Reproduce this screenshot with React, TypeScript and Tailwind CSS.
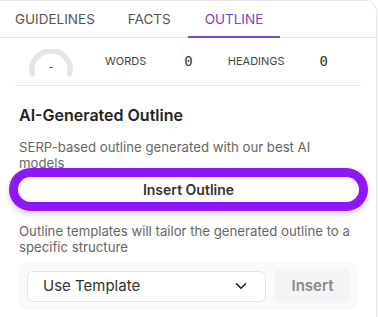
import React from "react";

export default function App() {
  return (
    <div
      className="w-[378px] h-[317px] bg-white overflow-hidden"
      style={{ fontFamily: "Inter, 'Noto Sans', sans-serif" }}
    >
      <div className="w-[377px] h-[330px] bg-white border-r border-t border-[#e6e6e8] rounded-tr-[12px]">
        {/* Tabs */}
        <div className="flex h-[37px] border-b border-[#e4e4e7]">
          <div className="pl-[15px] pr-[16px] flex items-center text-[13.5px] text-[#555] uppercase h-[37px]">
            Guidelines
          </div>
          <div className="px-[17px] flex items-center text-[13.5px] text-[#555] uppercase h-[37px]">
            Facts
          </div>
          <div className="px-[17px] flex items-center text-[13.5px] text-[#7d3fd0] uppercase h-[37px] border-b-[2px] border-[#7d45d6] mb-[-1px] pt-[1px]">
            Outline
          </div>
        </div>

        {/* Stats */}
        <div className="mx-[15px] h-[48px] border-b border-[#e7e7ea] flex items-center">
          <div className="ml-[14px] relative w-[44px] h-[28px] mt-[2px]">
            <svg width="44" height="28" viewBox="0 0 44 28">
              <path
                d="M 3.5 25 A 19 19 0 1 1 40.5 25"
                fill="none"
                stroke="#e6e6e8"
                strokeWidth="5.5"
                strokeLinecap="round"
              />
            </svg>
            <div className="absolute left-0 right-0 top-[13px] text-center text-[10px] leading-none text-[#333]">
              -
            </div>
          </div>
          <div className="ml-[32px] text-[11px] text-[#444] uppercase">Words</div>
          <div
            className="ml-[38px] text-[14px] text-[#333]"
            style={{ fontFamily: "'DejaVu Sans Mono', monospace" }}
          >
            0
          </div>
          <div className="ml-[35px] text-[11px] text-[#444] uppercase">Headings</div>
          <div
            className="ml-[35px] text-[14px] text-[#333]"
            style={{ fontFamily: "'DejaVu Sans Mono', monospace" }}
          >
            0
          </div>
        </div>

        {/* Section */}
        <div className="px-[19px]">
          <div className="mt-[19px] text-[16px] font-semibold text-[#222] leading-[20px]">
            AI-Generated Outline
          </div>
          <div className="mt-[14px] max-w-[336px] text-[13.2px] text-[#666] leading-[16px]">
            SERP-based outline generated with our best AI models
          </div>
          <button className="mt-[6px] w-[341px] -ml-[1px] h-[25px] rounded-full bg-white text-[14px] font-semibold text-[#333] shadow-[0_0_0_9px_#8f17f7,0_3px_6px_9px_rgba(0,0,0,0.18)] flex items-center justify-center">
            Insert Outline
          </button>
          <div className="mt-[21px] max-w-[336px] text-[13.2px] text-[#666] leading-[16px]">
            Outline templates will tailor the generated outline to a specific structure
          </div>
          <div className="mt-[7px] w-[338px] h-[48px] bg-[#faf9fb] rounded-[8px] flex items-center pl-[8px] pr-[7px]">
            <div className="w-[239px] h-[31px] bg-white border border-[#e4e4e7] rounded-[6px] flex items-center pl-[15px] pr-[18px] justify-between">
              <span className="text-[15px] text-[#333]">Use Template</span>
              <svg width="12" height="8" viewBox="0 0 12 8">
                <path d="M1.5 1.8 L6 6.2 L10.5 1.8" fill="none" stroke="#222" strokeWidth="1.6" strokeLinecap="round" strokeLinejoin="round" />
              </svg>
            </div>
            <div className="ml-[9px] w-[75px] h-[34px] rounded-[6px] bg-[#f4f3f5] flex items-center justify-center text-[15px] font-semibold text-[#8a8a8e]">
              Insert
            </div>
          </div>
        </div>
      </div>
    </div>
  );
}
